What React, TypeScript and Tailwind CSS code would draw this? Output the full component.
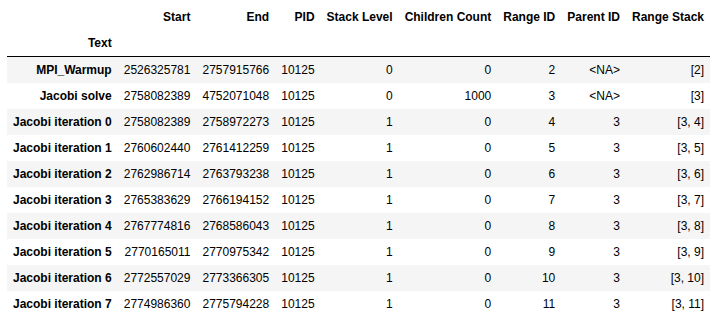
const columns = [
  "Start",
  "End",
  "PID",
  "Stack Level",
  "Children Count",
  "Range ID",
  "Parent ID",
  "Range Stack",
];

type Row = {
  text: string;
  start: number;
  end: number;
  pid: number;
  level: number;
  children: number;
  rangeId: number;
  parentId: string;
  stack: string;
};

const rows: Row[] = [
  { text: "MPI_Warmup", start: 2526325781, end: 2757915766, pid: 10125, level: 0, children: 0, rangeId: 2, parentId: "<NA>", stack: "[2]" },
  { text: "Jacobi solve", start: 2758082389, end: 4752071048, pid: 10125, level: 0, children: 1000, rangeId: 3, parentId: "<NA>", stack: "[3]" },
  { text: "Jacobi iteration 0", start: 2758082389, end: 2758972273, pid: 10125, level: 1, children: 0, rangeId: 4, parentId: "3", stack: "[3, 4]" },
  { text: "Jacobi iteration 1", start: 2760602440, end: 2761412259, pid: 10125, level: 1, children: 0, rangeId: 5, parentId: "3", stack: "[3, 5]" },
  { text: "Jacobi iteration 2", start: 2762986714, end: 2763793238, pid: 10125, level: 1, children: 0, rangeId: 6, parentId: "3", stack: "[3, 6]" },
  { text: "Jacobi iteration 3", start: 2765383629, end: 2766194152, pid: 10125, level: 1, children: 0, rangeId: 7, parentId: "3", stack: "[3, 7]" },
  { text: "Jacobi iteration 4", start: 2767774816, end: 2768586043, pid: 10125, level: 1, children: 0, rangeId: 8, parentId: "3", stack: "[3, 8]" },
  { text: "Jacobi iteration 5", start: 2770165011, end: 2770975342, pid: 10125, level: 1, children: 0, rangeId: 9, parentId: "3", stack: "[3, 9]" },
  { text: "Jacobi iteration 6", start: 2772557029, end: 2773366305, pid: 10125, level: 1, children: 0, rangeId: 10, parentId: "3", stack: "[3, 10]" },
  { text: "Jacobi iteration 7", start: 2774986360, end: 2775794228, pid: 10125, level: 1, children: 0, rangeId: 11, parentId: "3", stack: "[3, 11]" },
];

const cell = "px-[6px] py-[6px] text-right align-middle leading-[normal]";

const App = () => {
  return (
    <div className="bg-white pl-[7px] pt-[4px] font-['Liberation_Sans',Arial,sans-serif] text-[12px] text-black">
      <table className="border-collapse border-spacing-0">
        <thead className="border-b border-black align-bottom">
          <tr>
            <th className={`${cell} font-bold`}></th>
            {columns.map((c) => (
              <th key={c} className={`${cell} font-bold`}>
                {c}
              </th>
            ))}
          </tr>
          <tr>
            <th className={`${cell} font-bold`}>Text</th>
            {columns.map((c) => (
              <th key={c} className={cell}></th>
            ))}
          </tr>
        </thead>
        <tbody>
          {rows.map((r, i) => (
            <tr key={r.text} className={i % 2 === 0 ? "bg-[#f5f5f5]" : "bg-white"}>
              <th className={`${cell} font-bold`}>{r.text}</th>
              <td className={cell}>{r.start}</td>
              <td className={cell}>{r.end}</td>
              <td className={cell}>{r.pid}</td>
              <td className={cell}>{r.level}</td>
              <td className={cell}>{r.children}</td>
              <td className={cell}>{r.rangeId}</td>
              <td className={cell}>{r.parentId}</td>
              <td className={cell}>{r.stack}</td>
            </tr>
          ))}
        </tbody>
      </table>
    </div>
  );
};

export default App;
